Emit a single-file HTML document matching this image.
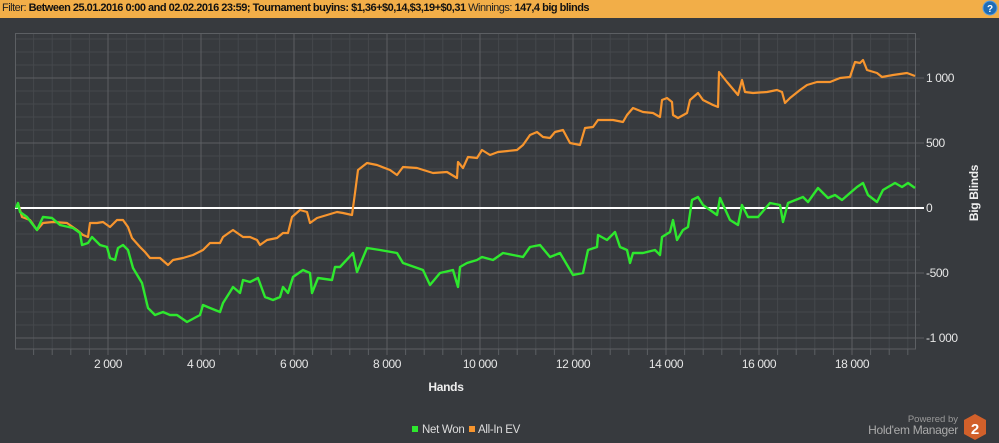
<!DOCTYPE html>
<html><head><meta charset="utf-8"><style>
html,body{margin:0;padding:0;background:#373a3e;width:999px;height:443px;overflow:hidden;font-family:"Liberation Sans",sans-serif}
.hdr{position:absolute;left:0;top:0;width:999px;height:18px;background:#f2ae48;font-size:11px;line-height:17px;color:#222;white-space:nowrap;letter-spacing:-0.5px}
.hdr span{padding-left:2px}
.hdr b{color:#111}
</style></head><body>
<div class="hdr"><span>Filter: <b>Between 25.01.2016 0:00 and 02.02.2016 23:59; Tournament buyins: $1,36+$0,14,$3,19+$0,31</b> Winnings: <b>147,4 big blinds</b></span></div>
<svg width="999" height="443" style="position:absolute;left:0;top:0" xmlns="http://www.w3.org/2000/svg">
<circle cx="990" cy="8" r="7" fill="#1f6cb5" stroke="#5fa0dc" stroke-width="1"/>
<text x="990" y="12" font-size="10" font-weight="bold" fill="#fff" text-anchor="middle" font-family="Liberation Sans">?</text>
<g stroke="#45484c" stroke-width="1">
<path d="M33.6 33V349M52.2 33V349M70.8 33V349M89.4 33V349M126.6 33V349M145.2 33V349M163.8 33V349M182.4 33V349M219.6 33V349M238.2 33V349M256.8 33V349M275.4 33V349M312.6 33V349M331.2 33V349M349.8 33V349M368.4 33V349M405.6 33V349M424.2 33V349M442.8 33V349M461.4 33V349M498.6 33V349M517.2 33V349M535.8 33V349M554.4 33V349M591.6 33V349M610.2 33V349M628.8 33V349M647.4 33V349M684.6 33V349M703.2 33V349M721.8 33V349M740.4 33V349M777.6 33V349M796.2 33V349M814.8 33V349M833.4 33V349M870.6 33V349M889.2 33V349M907.8 33V349"/>
<path d="M15 39H920M15 52H920M15 65H920M15 91H920M15 104H920M15 117H920M15 130H920M15 156H920M15 169H920M15 182H920M15 195H920M15 221H920M15 234H920M15 247H920M15 260H920M15 286H920M15 299H920M15 312H920M15 325H920"/>
</g>
<g stroke="#5c5f63" stroke-width="1">
<path d="M108 33V355M201 33V355M294 33V355M387 33V355M480 33V355M573 33V355M666 33V355M759 33V355M852 33V355"/>
<path d="M15 78H924M15 143H924M15 273H924M15 338H924"/>
<path d="M33.6 349V355M52.2 349V355M70.8 349V355M89.4 349V355M126.6 349V355M145.2 349V355M163.8 349V355M182.4 349V355M219.6 349V355M238.2 349V355M256.8 349V355M275.4 349V355M312.6 349V355M331.2 349V355M349.8 349V355M368.4 349V355M405.6 349V355M424.2 349V355M442.8 349V355M461.4 349V355M498.6 349V355M517.2 349V355M535.8 349V355M554.4 349V355M591.6 349V355M610.2 349V355M628.8 349V355M647.4 349V355M684.6 349V355M703.2 349V355M721.8 349V355M740.4 349V355M777.6 349V355M796.2 349V355M814.8 349V355M833.4 349V355M870.6 349V355M889.2 349V355M907.8 349V355"/>
<rect x="15.5" y="33.5" width="900" height="315.5" fill="none"/>
</g>
<line x1="15" y1="208" x2="924" y2="208" stroke="#fff" stroke-width="2"/>
<polyline fill="none" stroke="#f7952e" stroke-width="2.2" stroke-linejoin="round" points="18,203 22,217 30,220 37,230 43,223 53,222 67,223 77,230 83,235 88,237 90,223 97,223 103,222 110,227 117,220 123,220 128,227 132,238 140,247 145,252 150,258 160,258 168,265 173,260 183,258 193,255 203,250 210,243 220,243 223,237 230,232 233,230 243,237 250,237 257,240 260,245 267,240 277,238 283,233 288,233 292,217 300,210 307,212 310,223 317,218 327,215 337,212 343,213 352,215 355,193 358,170 367,163 377,165 390,170 397,175 403,167 417,168 433,173 447,172 457,178 458,162 463,168 468,157 477,158 482,150 490,155 498,152 517,150 523,145 530,135 537,132 543,137 550,138 555,132 563,130 570,143 580,145 585,128 593,127 598,120 613,120 623,122 627,115 633,108 643,112 653,113 660,117 662,100 667,98 672,102 673,115 678,118 687,113 690,100 698,93 703,100 713,105 718,107 719,72 727,82 738,95 742,80 745,92 753,93 767,92 777,90 782,92 785,103 790,98 800,90 807,85 817,82 830,82 840,78 850,77 855,62 860,63 863,60 867,70 877,73 882,77 893,75 907,73 915,76"/>
<polyline fill="none" stroke="#2ee82e" stroke-width="2.4" stroke-linejoin="round" points="16,208 18,203 20,212 27,217 37,230 43,217 52,218 60,225 73,228 80,233 82,245 88,243 92,237 100,245 107,247 110,258 115,260 118,248 123,245 128,250 133,268 142,283 148,308 155,315 163,312 170,315 177,315 187,322 200,315 203,305 210,308 220,312 223,303 230,292 233,287 240,293 243,280 250,282 258,278 265,297 273,300 280,297 283,287 288,293 293,277 303,270 310,273 312,293 318,278 332,280 335,267 340,267 353,253 357,272 367,248 380,250 397,253 403,263 423,270 430,285 440,273 453,270 458,287 460,267 467,263 477,260 482,257 493,260 503,253 513,255 523,257 530,247 540,245 550,257 560,253 573,275 583,273 588,250 597,247 598,235 607,240 615,232 620,247 627,250 630,263 633,253 643,253 655,250 660,255 662,237 670,232 673,220 677,240 683,230 688,227 692,200 698,197 703,205 710,210 717,215 720,198 730,220 738,225 742,205 748,217 758,217 770,203 780,205 783,222 788,203 803,197 808,202 818,188 828,198 835,195 842,200 850,193 857,187 863,183 868,195 877,202 883,190 895,183 902,187 908,183 915,188"/>
<g fill="#e6e6e6" font-size="12" font-family="Liberation Sans" letter-spacing="-0.4">
<text x="108" y="368" text-anchor="middle">2 000</text>
<text x="201" y="368" text-anchor="middle">4 000</text>
<text x="294" y="368" text-anchor="middle">6 000</text>
<text x="387" y="368" text-anchor="middle">8 000</text>
<text x="480" y="368" text-anchor="middle">10 000</text>
<text x="573" y="368" text-anchor="middle">12 000</text>
<text x="666" y="368" text-anchor="middle">14 000</text>
<text x="759" y="368" text-anchor="middle">16 000</text>
<text x="852" y="368" text-anchor="middle">18 000</text>
<text x="926" y="82">1 000</text>
<text x="926" y="147">500</text>
<text x="926" y="212">0</text>
<text x="926" y="277">-500</text>
<text x="926" y="342">-1 000</text>
</g>
<text x="446" y="391" fill="#eee" font-size="12" font-weight="bold" text-anchor="middle" letter-spacing="-0.3">Hands</text>
<text transform="translate(978,193) rotate(-90)" fill="#eee" font-size="12" font-weight="bold" text-anchor="middle" letter-spacing="-0.3">Big Blinds</text>
<rect x="412" y="426" width="6" height="6" fill="#2ee82e"/>
<text x="422" y="433" fill="#ddd" font-size="11.5" letter-spacing="-0.3">Net Won</text>
<rect x="469" y="426" width="6" height="6" fill="#f7952e"/>
<text x="478" y="433" fill="#ddd" font-size="11.5" letter-spacing="-0.3">All-In EV</text>
<text x="958" y="422" fill="#999" font-size="9.5" text-anchor="end">Powered by</text>
<text x="958" y="434" fill="#aaa" font-size="12" text-anchor="end" letter-spacing="-0.3">Hold'em Manager</text>
<polygon points="975,414 986,420 986,434 975,440 964,434 964,420" fill="#d2602a"/>
<text x="975" y="434" fill="#fff" font-size="15" font-weight="bold" text-anchor="middle">2</text>
</svg>
</body></html>
